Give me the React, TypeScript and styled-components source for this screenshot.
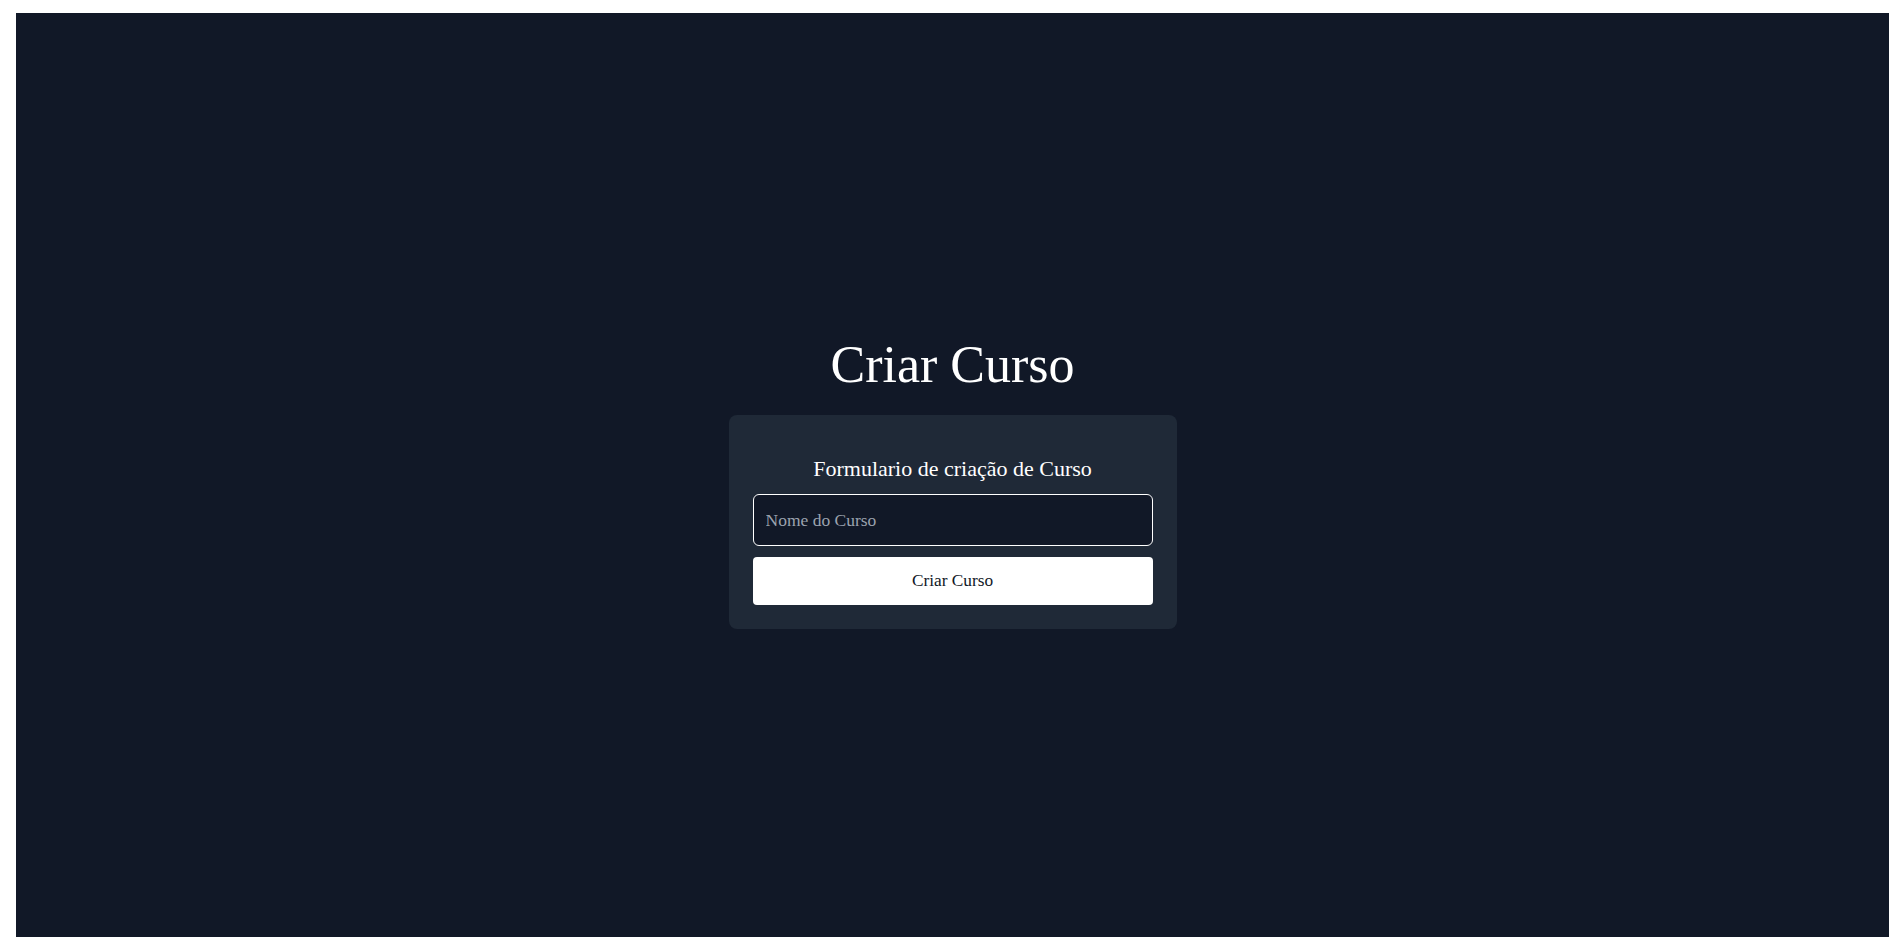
import styled, { createGlobalStyle } from "styled-components";

const GlobalStyle = createGlobalStyle`
  html, body {
    margin: 0;
    padding: 0;
    background-color: #ffffff;
  }

  * {
    box-sizing: border-box;
  }
`;

const App = () => {
  return (
    <>
      <GlobalStyle />
      <Screen>
        <Title>Criar Curso</Title>
        <Card as="form" onSubmit={(e: React.FormEvent) => e.preventDefault()}>
          <FormTitle>Formulario de criação de Curso</FormTitle>
          <Input type="text" placeholder="Nome do Curso" />
          <SubmitButton type="submit">Criar Curso</SubmitButton>
        </Card>
      </Screen>
    </>
  );
};

export default App;

const Screen = styled("main")({
  margin: "13px 7px 0 16px",
  minHeight: "100vh",
  paddingTop: 3,
  display: "flex",
  flexDirection: "column",
  alignItems: "center",
  justifyContent: "center",
  backgroundColor: "#111827",
  fontFamily: '"Liberation Serif", "Times New Roman", serif',
});

const Title = styled("h1")({
  margin: "0 0 22px",
  fontSize: 52,
  lineHeight: "56px",
  fontWeight: 400,
  color: "#ffffff",
});

const Card = styled("div")({
  width: 448,
  padding: "40px 24px 24px",
  display: "flex",
  flexDirection: "column",
  alignItems: "stretch",
  gap: 11,
  borderRadius: 8,
  backgroundColor: "#1f2937",
});

const FormTitle = styled("h2")({
  margin: 0,
  fontSize: 22,
  lineHeight: "28px",
  fontWeight: 400,
  textAlign: "center",
  color: "#ffffff",
});

const Input = styled("input")({
  height: 52,
  width: "100%",
  padding: "0 12px",
  border: "1px solid #ffffff",
  borderRadius: 6,
  backgroundColor: "#111827",
  color: "#ffffff",
  fontFamily: "inherit",
  fontSize: 17.5,
  outline: "none",
  "&::placeholder": {
    color: "#9ca3af",
  },
});

const SubmitButton = styled("button")({
  height: 48,
  width: "100%",
  border: "none",
  borderRadius: 4,
  backgroundColor: "#ffffff",
  color: "#111827",
  fontFamily: "inherit",
  fontSize: 17.3,
  cursor: "pointer",
});
